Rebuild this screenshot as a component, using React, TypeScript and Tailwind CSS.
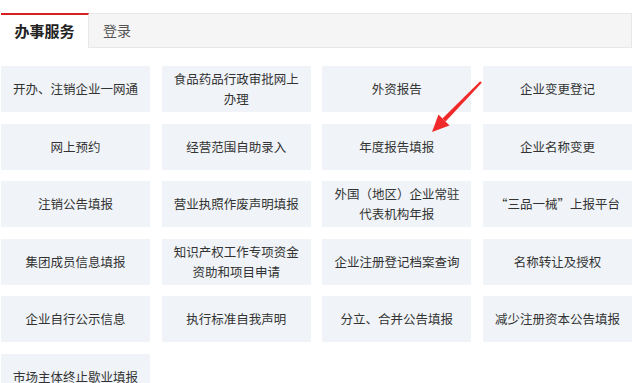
import React from "react";

const items: string[] = [
  "开办、注销企业一网通",
  "食品药品行政审批网上办理",
  "外资报告",
  "企业变更登记",
  "网上预约",
  "经营范围自助录入",
  "年度报告填报",
  "企业名称变更",
  "注销公告填报",
  "营业执照作废声明填报",
  "外国（地区）企业常驻代表机构年报",
  "“三品一械”上报平台",
  "集团成员信息填报",
  "知识产权工作专项资金资助和项目申请",
  "企业注册登记档案查询",
  "名称转让及授权",
  "企业自行公示信息",
  "执行标准自我声明",
  "分立、合并公告填报",
  "减少注册资本公告填报",
  "市场主体终止歇业填报",
];

function Arrow() {
  return (
    <svg
      className="absolute left-[428px] top-[78px] pointer-events-none"
      width="58"
      height="58"
      viewBox="0 0 58 58"
    >
      <path d="M53.8 4.8 L17.6 43.6 L14.4 40.4 L52.2 3.2 Z" fill="#f02a2a" />
      <path d="M4 54 L10.5 36.5 L21.5 47.5 Z" fill="#f02a2a" />
    </svg>
  );
}

export default function App() {
  return (
    <div
      className="relative w-[643px] h-[383px] overflow-hidden bg-white text-[#333]"
      style={{ fontFamily: '"Noto Sans CJK SC", "Noto Sans", sans-serif' }}
    >
      <div className="ml-[1px] mt-[13px] w-[631px] h-[35px] flex bg-[#f5f5f5] border border-[#e8e8e8]">
        <div className="-mt-px -ml-px w-[88px] h-[35px] bg-white border-t-2 border-[#d61f1f] border-r border-r-[#e8e8e8] flex items-center justify-center text-[15px] font-bold text-[#222]">
          办事服务
        </div>
        <div className="w-[56px] flex items-center justify-center text-[14px] text-[#555]">
          登录
        </div>
      </div>
      <div className="ml-[1px] mt-[18px] grid grid-cols-[repeat(4,149px)] gap-x-[11.7px] gap-y-[11.6px]">
        {items.map((t) => (
          <div
            key={t}
            className="h-[46px] bg-[#f0f3f8] flex items-center justify-center text-center px-[12px] text-[12.5px] leading-[20px]"
          >
            {t}
          </div>
        ))}
      </div>
      <Arrow />
    </div>
  );
}
